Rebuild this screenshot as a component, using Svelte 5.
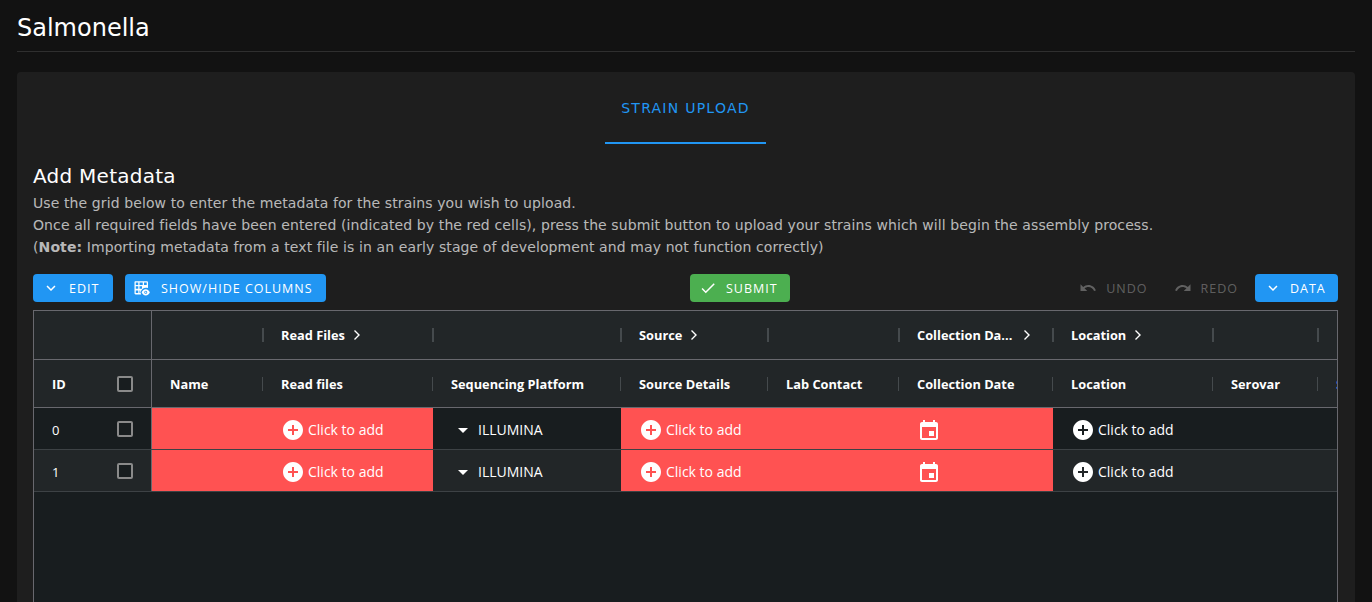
<script>
  const chevronDown = "M16.59 8.59L12 13.17 7.41 8.59 6 10l6 6 6-6z";
  const addCircle = "M12 2C6.48 2 2 6.48 2 12s4.48 10 10 10 10-4.48 10-10S17.52 2 12 2zm5 11h-4v4h-2v-4H7v-2h4V7h2v4h4v2z";
  const eventIcon = "M17 12h-5v5h5v-5zM16 1v2H8V1H6v2H5c-1.11 0-1.99.9-1.99 2L3 19c0 1.1.89 2 2 2h14c1.1 0 2-.9 2-2V5c0-1.1-.9-2-2-2h-1V1h-2zm3 18H5V8h14v11z";
  const groupHeaders = [
    { label: "", more: false },
    { label: "Read Files", more: true },
    { label: "", more: false },
    { label: "Source", more: true },
    { label: "", more: false },
    { label: "Collection Da...", more: true, wide: true },
    { label: "Location", more: true },
    { label: "", more: false },
    { label: "", more: false }
  ];
  const headers = ["Name", "Read files", "Sequencing Platform", "Source Details", "Lab Contact", "Collection Date", "Location", "Serovar", "S"];
  const rows = ["0", "1"];
</script>

<div class="page">
  <h1 class="title">Salmonella</h1>

  <section class="card">
    <nav class="tabs"><div class="tab">STRAIN UPLOAD</div></nav>

    <h2 class="heading">Add Metadata</h2>
    <p class="copy">Use the grid below to enter the metadata for the strains you wish to upload.</p>
    <p class="copy">Once all required fields have been entered (indicated by the red cells), press the submit button to upload your strains which will begin the assembly process.</p>
    <p class="copy">(<strong>Note:</strong> Importing metadata from a text file is in an early stage of development and may not function correctly)</p>

    <div class="toolbar">
      <button class="btn edit"><svg viewBox="0 0 24 24"><path d={chevronDown} /></svg>EDIT</button>
      <button class="btn columns">
        <svg viewBox="0 0 24 24"><path fill-rule="evenodd" d="M3 3h15.5c.8 0 1.5.7 1.5 1.5v7.6c-.9-.4-1.9-.6-3-.6-3.2 0-6 2.5-7 6.2.2.9.5 1.8.9 2.8H3.5c-.8 0-1.5-.7-1.5-1.5V4c0-.6.4-1 1-1zM3.7 4.7V8H7V4.7H3.7zM8.7 4.7V8H13V4.7H8.7zM14.7 4.7V8h3.6V4.7h-3.6zM3.7 9.7V13H7V9.7H3.7zM8.7 9.7V13H12V9.7H8.7zM3.7 15.2v3.6H7v-3.6H3.7zM8.7 15.2v3.6h.9v-3.6h-.9z" /><path fill-rule="evenodd" d="M17 13.5c-2.5 0-4.64 1.75-5.5 4.25.86 2.5 3 4.25 5.5 4.25s4.64-1.75 5.5-4.25c-.86-2.5-3-4.25-5.5-4.25zm0 2.25a2 2 0 1 1 0 4 2 2 0 0 1 0-4zm0 1a1 1 0 1 0 0 2 1 1 0 0 0 0-2z" /></svg>
        SHOW/HIDE COLUMNS
      </button>
      <button class="btn submit"><svg viewBox="0 0 24 24"><path d="M9 16.17L4.83 12l-1.42 1.41L9 19 21 7l-1.41-1.41z" /></svg>SUBMIT</button>
      <div class="history">
        <span class="ghost"><svg viewBox="0 0 24 24"><path d="M12.5 8c-2.65 0-5.05.99-6.9 2.6L2 7v9h9l-3.62-3.62c1.39-1.16 3.16-1.88 5.12-1.88 3.54 0 6.55 2.31 7.6 5.5l2.37-.78C21.08 11.03 17.15 8 12.5 8z" /></svg>UNDO</span>
        <span class="ghost"><svg viewBox="0 0 24 24"><path d="M18.4 10.6C16.55 8.99 14.15 8 11.5 8c-4.65 0-8.58 3.03-9.96 7.22L3.9 16c1.05-3.19 4.05-5.5 7.6-5.5 1.95 0 3.73.72 5.12 1.88L13 16h9V7l-3.6 3.6z" /></svg>REDO</span>
        <button class="btn data"><svg viewBox="0 0 24 24"><path d={chevronDown} /></svg>DATA</button>
      </div>
    </div>

    <div class="grid">
      <div class="row head-row group-row">
        <div class="pin"></div>
        {#each groupHeaders as g}
          <div class="hcell">
            {#if g.label}
              <span class="hlabel">{g.label}</span>
            {/if}
            {#if g.more}
              <svg class="more" class:wide={g.wide} viewBox="0 0 10 12"><path d="M2.5 1.5L7 6l-4.5 4.5" /></svg>
            {/if}
          </div>
        {/each}
      </div>
      <div class="row head-row col-row">
        <div class="pin">
          <span class="id">ID</span>
          <span class="check"></span>
        </div>
        {#each headers as h, i}
          <div class="hcell clip" class:cut={i === 8}><span class="hlabel">{h}</span></div>
        {/each}
      </div>

      {#each rows as r, i}
        <div class="row data-row" class:odd={i === 1}>
          <div class="pin"><span class="rid">{r}</span><span class="check"></span></div>
          <div class="cell red"></div>
          <div class="cell red"><svg class="add" viewBox="2 2 20 20"><path d={addCircle} /></svg><span class="txt">Click to add</span></div>
          <div class="cell"><svg class="drop" viewBox="7 10 10 5"><path d="M7 10l5 5 5-5z" /></svg><span class="txt">ILLUMINA</span></div>
          <div class="cell red"><svg class="add" viewBox="2 2 20 20"><path d={addCircle} /></svg><span class="txt">Click to add</span></div>
          <div class="cell red"></div>
          <div class="cell red"><svg class="cal" viewBox="3 1 18 20"><path d={eventIcon} /></svg></div>
          <div class="cell"><svg class="add" viewBox="2 2 20 20"><path d={addCircle} /></svg><span class="txt">Click to add</span></div>
          <div class="cell"></div>
          <div class="cell"></div>
        </div>
      {/each}
    </div>
  </section>
</div>

<style>
  :global(html), :global(body) { margin: 0; height: 100%; overflow: hidden; background: #121212; }
  .page {
    height: 602px;
    overflow: hidden;
    padding: 0 17px;
    box-sizing: border-box;
    background: #121212;
    color: #fff;
    font-family: "DejaVu Sans", sans-serif;
  }
  .title {
    margin: 0 0 20px;
    height: 51px;
    border-bottom: 1px solid #2f2f2f;
    font-size: 24px;
    font-weight: 400;
    line-height: 56px;
  }
  .card {
    background: #1e1e1e;
    border-radius: 4px;
    padding: 0 17px 0 16px;
    height: 600px;
  }
  .tabs { display: flex; justify-content: center; height: 72px; }
  .tab {
    width: 161px;
    height: 72px;
    box-sizing: border-box;
    border-bottom: 2px solid #2196f3;
    color: #2196f3;
    font-size: 14px;
    letter-spacing: 1.25px;
    text-align: center;
    line-height: 73px;
  }
  .heading {
    margin: 18px 0 0;
    padding-bottom: 2px;
    font-size: 20px;
    font-weight: 400;
    letter-spacing: .25px;
    line-height: 28px;
  }
  .copy {
    margin: 0;
    font-size: 14px;
    line-height: 22px;
    letter-spacing: .1px;
    color: rgba(255, 255, 255, .7);
  }
  .copy strong { font-weight: 700; }
  .toolbar { display: flex; align-items: center; height: 28px; margin-top: 16px; }
  .btn {
    display: inline-flex;
    align-items: center;
    height: 28px;
    padding: 0;
    border: 0;
    border-radius: 4px;
    background: #2196f3;
    color: #fff;
    font-family: "Open Sans", sans-serif;
    font-size: 12.5px;
    letter-spacing: 1px;
    box-sizing: border-box;
  }
  .btn svg, .ghost svg { width: 18px; height: 18px; fill: currentColor; flex: none; }
  .edit { width: 80px; padding-left: 9px; gap: 9px; }
  .columns { width: 201px; margin-left: 12px; padding-left: 8px; gap: 10px; }
  .submit { width: 100px; margin-left: 364px; background: #4caf50; padding-left: 9px; gap: 9px; }
  .history { margin-left: auto; display: flex; align-items: center; }
  .ghost {
    display: inline-flex;
    align-items: center;
    gap: 9px;
    color: rgba(255, 255, 255, .3);
    font-family: "Open Sans", sans-serif;
    font-size: 12.5px;
    letter-spacing: 1px;
  }
  .ghost + .ghost { margin-left: 26px; }
  .data { width: 83px; margin-left: 17px; padding-left: 9px; gap: 8px; }

  .grid {
    margin-top: 8px;
    width: 1305px;
    height: 400px;
    box-sizing: border-box;
    border: 1px solid #68686e;
    background: #181d1f;
    font-family: "Open Sans", sans-serif;
    font-size: 13px;
    overflow: hidden;
  }
  .row {
    display: grid;
    grid-template-columns: 118px 111px 170px 188px 147px 131px 154px 160px 105px 60px;
  }
  .pin {
    display: flex;
    align-items: center;
    box-sizing: border-box;
    border-right: 1px solid #68686e;
    padding-left: 18px;
    position: relative;
  }
  .head-row { background: #222628; }
  .group-row { height: 48px; border-bottom: 1px solid #68686e; }
  .col-row { height: 47px; border-bottom: 1px solid #68686e; }
  .id, .hlabel { font-weight: 700; font-size: 12.8px; white-space: nowrap; }
  .hcell {
    display: flex;
    align-items: center;
    padding-left: 18px;
    position: relative;
    box-sizing: border-box;
  }
  .clip { overflow: hidden; }
  .hcell:not(:last-child)::after {
    content: "";
    position: absolute;
    right: 0;
    top: 50%;
    width: 1px;
    height: 14px;
    margin-top: -7px;
    background: #454a4d;
  }
  .group-row .hcell:not(:last-child)::after { width: 2px; right: -1px; }
  .cut .hlabel { color: #2196f3; }
  .more { width: 10px; height: 12px; margin-left: 7px; fill: none; stroke: #fff; stroke-width: 1.4; flex: none; }
  .more.wide { margin-left: 10px; }
  .check {
    position: absolute;
    left: 83px;
    top: 50%;
    margin-top: -8px;
    width: 16px;
    height: 16px;
    box-sizing: border-box;
    border: 2px solid #8a8a8a;
    border-radius: 2px;
    background: #181d1f;
  }
  .data-row { height: 42px; box-sizing: border-box; border-bottom: 1px solid #3d4245; }
  .data-row .pin { padding-top: 3px; }
  .data-row.odd { background: #222628; }
  .rid { font-size: 13px; }
  .cell {
    display: flex;
    align-items: center;
    gap: 5px;
    padding: 3px 0 0 18px;
    font-size: 14px;
    white-space: nowrap;
    overflow: hidden;
  }
  .txt { margin-top: -2px; }
  .red { background: #ff5252; }
  .add { width: 20px; height: 20px; fill: #fff; flex: none; margin-left: 2px; }
  .drop { width: 10px; height: 5px; fill: #fff; margin-left: 7px; margin-right: 5px; flex: none; }
  .cal { width: 18px; height: 20px; fill: #fff; margin-left: 3px; }
</style>
